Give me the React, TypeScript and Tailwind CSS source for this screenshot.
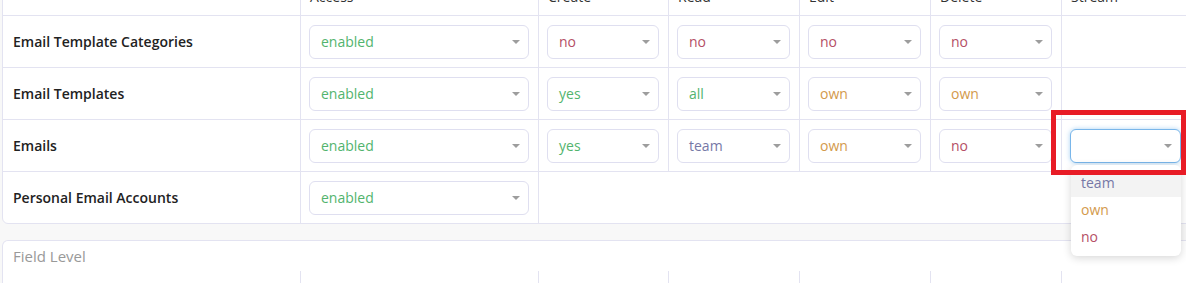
import React from "react";

type Opt = { t: string; c: string } | null;

const GREEN = "text-[#52b46e]";
const RED = "text-[#b54f66]";
const ORANGE = "text-[#d39a4c]";
const TEAM = "text-[#7678a6]";

const en: Opt = { t: "enabled", c: GREEN };
const yes: Opt = { t: "yes", c: GREEN };
const all: Opt = { t: "all", c: GREEN };
const no: Opt = { t: "no", c: RED };
const own: Opt = { t: "own", c: ORANGE };
const team: Opt = { t: "team", c: TEAM };

const widths = ["w-[297px]", "w-[238px]", "w-[130px]", "w-[131px]", "w-[131px]", "w-[131px]", "w-[129px]"];

function Caret() {
  return (
    <span className="absolute right-[8px] top-1/2 -mt-[2px] h-0 w-0 border-x-[4px] border-t-[4px] border-x-transparent border-t-[#9d9d9d]" />
  );
}

function Select({ v, focus }: { v: Opt; focus?: boolean }) {
  return (
    <div
      className={
        "relative flex h-[34px] w-full items-center rounded-[6px] border bg-white pl-[11px] text-[14px] leading-5 " +
        (focus
          ? "border-[#79b6ea] shadow-[0_0_5px_rgba(102,175,233,0.55)]"
          : "border-[#dfdff0]")
      }
    >
      {v && <span className={v.c}>{v.t}</span>}
      <Caret />
      {focus && (
        <div className="absolute left-0 top-[calc(100%+3px)] z-10 w-[110px] rounded-[6px] bg-white py-[5px] shadow-[0_2px_8px_rgba(0,0,0,0.16)]">
          <div className={"flex h-[27px] items-center bg-[#f3f3f3] pl-[10px] " + TEAM}>team</div>
          <div className={"flex h-[27px] items-center pl-[10px] " + ORANGE}>own</div>
          <div className={"flex h-[27px] items-center pl-[10px] " + RED}>no</div>
        </div>
      )}
    </div>
  );
}

type Row = { label: string; cells: (Opt | "focus")[]; span?: boolean };

const rows: Row[] = [
  { label: "Email Template Categories", cells: [en, no, no, no, no, null] },
  { label: "Email Templates", cells: [en, yes, all, own, own, null] },
  { label: "Emails", cells: [en, yes, team, own, no, "focus"] },
  { label: "Personal Email Accounts", cells: [en], span: true },
];

const headers = ["Access", "Create", "Read", "Edit", "Delete", "Stream"];

export default function App() {
  return (
    <div
      className="relative h-[283px] w-[1186px] overflow-hidden bg-[#f8f8f8] text-[#333]"
      style={{ fontFamily: '"Open Sans", "Noto Sans", sans-serif' }}
    >
      {/* Main card */}
      <div className="-mt-[22px] ml-[2px] w-[1191px] rounded-[6px] border border-[#e3e3f1] bg-white">
        <div className="flex h-[37px] border-b border-[#e3e3f1]">
          <div className={widths[0]} />
          {headers.map((h, i) => (
            <div
              key={h}
              className={widths[i + 1] + " flex items-center border-l border-[#e3e3f1] pl-[9px] text-[14px] leading-5"}
            >
              {h}
            </div>
          ))}
        </div>
        {rows.map((r, ri) => (
          <div
            key={r.label}
            className={"flex " + (ri < rows.length - 1 ? "h-[52px] border-b border-[#e3e3f1]" : "h-[51px]")}
          >
            <div className={widths[0] + " flex items-center pl-[10px] text-[14px] font-semibold leading-5 text-[#222]"}>
              {r.label}
            </div>
            {r.cells.map((c, i) => (
              <div
                key={i}
                className={widths[i + 1] + " flex items-center border-l border-[#e3e3f1] pl-[8px] pr-[9px]"}
              >
                {c === "focus" ? <Select v={null} focus /> : c ? <Select v={c} /> : null}
              </div>
            ))}
            {r.span && <div className="flex-1 border-l border-[#e3e3f1]" />}
          </div>
        ))}
      </div>

      {/* Field Level card */}
      <div className="ml-[2px] mt-[16px] w-[1191px] rounded-t-[6px] border border-b-0 border-[#e3e3f1] bg-white">
        <div className="flex h-[30px] items-center pl-[10px] text-[15px] leading-5 text-[#999]">Field Level</div>
        <div className="flex h-[40px]">
          <div className={widths[0]} />
          {headers.map((h, i) => (
            <div key={h} className={widths[i + 1] + " border-l border-[#e3e3f1]"} />
          ))}
        </div>
      </div>

      {/* annotation */}
      <div className="pointer-events-none absolute left-[1051px] top-[110px] z-20 h-[65px] w-[135px] border-[5px] border-[#e81c26]" />
    </div>
  );
}
